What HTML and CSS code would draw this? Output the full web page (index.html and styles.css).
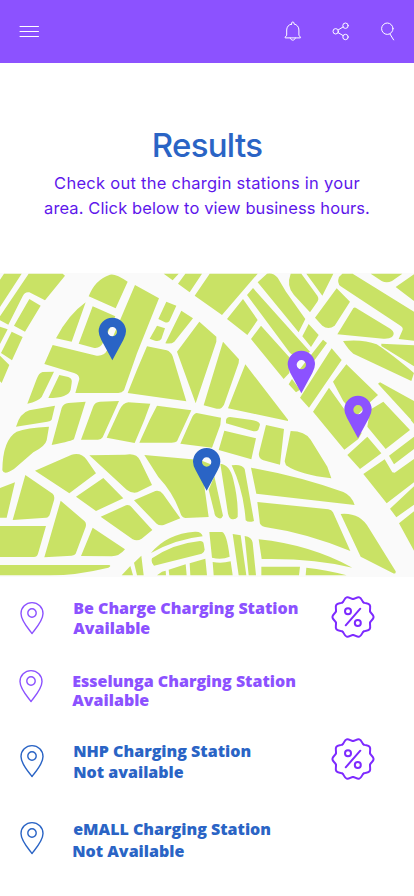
FILE: index.html
```html
<!DOCTYPE html>
<html lang="en">
<head>
<meta charset="utf-8">
<meta name="viewport" content="width=device-width, initial-scale=1">
<title>Results</title>
<link rel="stylesheet" href="styles.css">
</head>
<body>
<svg class="defs" aria-hidden="true">
  <symbol id="pin-outline" viewBox="-12 -12 24 34"><path d="M0 20.500C-3.500 15.800-11 8-11 .6A11 11 0 0 1 11 .6C11 8 3.500 15.800 0 20.500Z"/><circle r="4.200"/></symbol>
  <symbol id="badge" viewBox="-22 -22 44 44">
    <g id="lobes"><path id="lobe" d="M17.12-5.56C17.8-3.5 20.6-2.4 20.6 0S17.8 3.5 17.12 5.56"/><use href="#lobe" transform="rotate(36)"/><use href="#lobe" transform="rotate(72)"/><use href="#lobe" transform="rotate(108)"/><use href="#lobe" transform="rotate(144)"/><use href="#lobe" transform="rotate(180)"/><use href="#lobe" transform="rotate(216)"/><use href="#lobe" transform="rotate(252)"/><use href="#lobe" transform="rotate(288)"/><use href="#lobe" transform="rotate(324)"/></g>
    <circle cx="-5" cy="-5.8" r="3"/><circle cx="4.8" cy="6" r="3"/><path d="M-7.3 8.3L7.3-8.3"/>
  </symbol>
  <symbol id="pin" viewBox="-41 -42 82 128" overflow="visible"><path fill-rule="evenodd" d="M0 86L-33 25Q-41 10-41-1A41 41 0 0 1 41-1Q41 10 33 25ZM14 0A14 14 0 1 0-14 0A14 14 0 1 0 14 0Z"/></symbol>
</svg>

<header class="topbar">
  <svg class="menu" viewBox="0 0 22 24"><path d="M1 7.500h18.500M1 12.500h18.500M1 17.500h18.500"/></svg>
  <div class="actions">
    <svg viewBox="0 0 24 24"><path d="M10.6 5V4.2a1.2 1.2 0 0 1 2.4 0V5c3 .6 4.9 2.9 4.9 6v5.2l1.5 2v.7H4.2v-.7l1.5-2V11c0-3.100 1.900-5.400 4.900-6zM9.300 19c.4 3 4.600 3 5 0"/></svg>
    <svg viewBox="0 0 24 24"><circle cx="6.700" cy="12.300" r="2.700"/><circle cx="16.500" cy="6.700" r="2.700"/><circle cx="16.500" cy="18" r="2.700"/><path d="M9.100 11l5-3.100M9.100 13.600l5 3"/></svg>
    <svg viewBox="0 0 24 24"><circle cx="11.300" cy="9.700" r="5.700"/><path d="M13.900 14.900l3.700 6"/></svg>
  </div>
</header>

<main>
  <section class="intro">
    <h1>Results</h1>
    <p><span class="l1">Check out the chargin stations in your</span> <span class="l2">area. Click below to view business hours.</span></p>
  </section>

  <svg class="map" viewBox="0 0 1242 911">
    <g class="blocks">
      <path d="M12 2H65L0 102V20ZM86 2H188L195 8 135 82 88 58Q75 55 68 70L25 155 0 142V130ZM88 78L122 98 75 176 42 158ZM35 176L68 192 36 262 3 240ZM0 161L23 169 0 213ZM0 248L28 276 5 330 0 325Z"/>
      <path d="M266 70Q285 20 330 5Q345 0 383 26L347 106ZM257 88L215 206 168 196Q205 125 257 88ZM278 100L346 130 310 208Q300 228 280 224L236 212ZM158 216L290 248Q312 250 322 231L405 36 477 76 411 241 372 352Q366 360 355 360H226L238 318Q238 304 222 300L133 273Z"/>
      <path d="M128 297L162 296 125 372Q115 385 82 392L110 318Q117 299 128 297ZM178 306L205 312Q218 316 215 330L212 350Q205 375 145 375ZM165 398L155 440Q152 444 142 446L48 461Q60 420 88 412ZM205 390L257 386 222 498Q220 503 155 516L185 405Q190 392 205 390ZM300 386L357 384 308 493Q304 500 294 500H243L280 400Q285 387 300 386ZM385 388L451 392 433 441 404 510 320 494 358 412Q368 390 385 388Z"/>
      <path d="M441 220L500 232Q512 236 518 250L559 385 383 360 411 290ZM471 398L574 412 531 505Q527 509 515 509H418L449 441ZM590 420L663 434 661 456 636 524 541 512 575 436Q580 422 590 420ZM499 86L529 98 508 145Q503 150 495 148L475 138ZM471 158L495 166 484 198Q478 206 465 203L449 197ZM544 113L579 136 523 206Q515 214 496 211ZM598 146L649 191V206L587 391 531 236ZM669 206L717 259 716 270 672 395Q664 410 650 407L611 397ZM736 274L864 440V444L684 406Z"/>
      <path d="M491 2H536L518 22ZM556 2H606L569 58 534 32ZM629 2H773L666 126 584 68ZM729 78L773 141 742 186 681 138ZM773 28L801 2Q820-2 833 14L858 56 916 138 896 178ZM759 45L930 236 900 260 870 240 741 66ZM783 158L870 255 868 300 851 318 753 198ZM866 334L876 318 900 350 888 358ZM926 153L956 186 933 222 907 190ZM969 200L981 210 912 305 898 290ZM995 226L1025 261 927 404 900 374Z"/>
      <path d="M872 2H904L952 68Q958 78 952 86L930 118 882 66Q858 40 872 2ZM919 2H1000L967 68ZM1010 46L1050 86 1004 158Q985 172 967 158L945 134ZM1027 2H1058L1242 116V203L1196 198 1208 170Q1210 163 1198 156L1022 40Q1010 30 1017 12ZM1112 2H1207L1176 24Q1160 32 1145 24ZM1242 4V84L1187 42ZM1067 104L1172 168Q1188 180 1176 192 1168 198 1150 197L1012 184 1057 110Q1061 101 1067 104ZM1029 204Q1090 198 1130 214 1170 240 1242 300L1234 324 1060 242Q1045 230 1029 204ZM1144 212L1242 217V280L1144 219Z"/>
      <path d="M1039 274L1134 366 1110 388 1070 428 1030 385 999 326ZM1134 332L1140 328 1242 384V450ZM1150 386L1230 471 1157 528 1102 461 1110 410ZM987 344L1034 410 1085 480 1075 498 1033 530 939 416ZM1102 491L1144 541 1080 588 1042 546ZM1154 559L1177 598 1184 599 1242 558V628L1160 691 1090 603ZM1167 548L1242 491V528L1182 574ZM1242 640V695L1189 733 1170 707ZM1197 751L1242 715V833ZM1232 441H1242V453Z"/>
      <path d="M678 441Q680 432 690 432L755 441Q780 445 780 455L775 470Q770 478 755 473L678 451ZM673 473L768 496 754 559 656 531ZM798 456L852 468 840 575 790 562Q774 555 777 540ZM872 474Q915 474 932 500L982 581 994 616Q900 606 858 577L854 565ZM753 584Q900 610 1030 657 1055 668 1064 696L769 662ZM772 687L985 709Q995 710 999 718L1051 834Q920 780 795 762 778 758 779 745ZM1022 723Q1080 718 1107 766L1187 895Q1188 905 1178 900L1082 851ZM776 799Q930 815 1057 884 940 855 785 858ZM784 881H900L897 907H784ZM919 884Q980 890 1040 907H917Z"/>
      <path d="M50 476Q80 464 147 461L140 502Q136 520 100 538L42 588Q12 608 7 592 8 500 50 476ZM105 593L215 545Q245 538 260 560L288 601 208 661ZM268 547L375 545Q410 538 420 562L456 636 412 658Q395 662 380 650ZM310 615L370 676 288 714 228 671ZM76 606L158 662Q165 668 162 682L150 722Q147 733 138 734L38 741ZM45 628L20 734H0V645ZM0 759H138L114 842Q111 852 102 852H0ZM182 683L254 745Q260 751 257 762L227 842Q224 847 215 848L133 853ZM278 764L375 829Q358 850 335 850L243 849ZM0 876H328Q335 880 325 884 230 907 150 907H0ZM302 731L378 697Q388 694 395 703L457 771 425 797Q412 806 398 799Z"/>
      <path d="M402 682L466 654Q480 651 489 663L541 736 491 756Q478 759 470 752ZM433 546L600 561 632 574 613 640 626 732 556 735Q545 733 541 720 520 660 475 612ZM643 610L669 728Q664 740 655 735 643 730 643 718L626 650ZM661 572Q690 575 700 620 715 680 713 732 705 742 692 737 686 732 684 722ZM695 577Q725 572 734 588L762 744Q745 750 737 742 730 650 695 577ZM453 840Q500 782 585 776 605 775 608 790 530 798 453 840ZM456 856Q520 812 600 804 610 804 611 812L614 830Q613 838 605 842L462 878Q452 870 456 856ZM471 907L486 896 497 893 498 907ZM506 890L557 874 560 907H508ZM569 871L616 857 621 907H571ZM628 777H666Q680 780 689 851 665 861 636 854ZM638 867Q665 872 692 865L698 907H641ZM698 783L722 787 739 907H716ZM734 789Q756 792 758 809L768 907H746ZM365 907L391 879 399 907ZM402 869L424 848 431 907H411Z"/>
    </g>
    <use class="blue" href="#pin" x="296" y="134" width="82" height="128"/>
    <use class="blue" href="#pin" x="579" y="525" width="82" height="128"/>
    <use class="purple" href="#pin" x="863" y="233" width="82" height="128"/>
    <use class="purple" href="#pin" x="1033" y="368" width="82" height="128"/>
  </svg>

  <ul class="stations">
    <li class="row first available">
      <svg class="marker"><use href="#pin-outline"/></svg>
      <div class="text"><div>Be Charge Charging Station</div><div>Available</div></div>
      <svg class="badge"><use href="#badge"/></svg>
    </li>
    <li class="row second available">
      <svg class="marker"><use href="#pin-outline"/></svg>
      <div class="text"><div>Esselunga Charging Station</div><div>Available</div></div>
    </li>
    <li class="row third busy">
      <svg class="marker"><use href="#pin-outline"/></svg>
      <div class="text"><div>NHP Charging Station</div><div>Not available</div></div>
      <svg class="badge"><use href="#badge"/></svg>
    </li>
    <li class="row fourth busy">
      <svg class="marker"><use href="#pin-outline"/></svg>
      <div class="text"><div>eMALL Charging Station</div><div class="nudge">Not Available</div></div>
    </li>
  </ul>
</main>
</body>
</html>
```
FILE: styles.css
```css
* { box-sizing: border-box; }
body { margin: 0; width: 414px; height: 896px; overflow: hidden; background: #fff; font-family: "Open Sans", sans-serif; }
.defs { display: none; }
.topbar { height: 63px; background: #8c52ff; display: flex; align-items: center; justify-content: space-between; padding: 0 14px 1px 19px; }
.topbar svg { display: block; width: 24px; height: 24px; fill: none; stroke: #fff; stroke-width: 1; stroke-linecap: round; stroke-linejoin: round; }
.topbar .menu { width: 22px; }
.actions { display: flex; gap: 23.500px; }
.intro { height: 210px; padding-top: 62px; text-align: center; }
h1 { margin: 0; font: 500 33px/40px Inter, sans-serif; letter-spacing: -.7px; color: #2a64c5; }
.intro p { margin: 6px 0 0; font: 400 16.500px/25px Inter, sans-serif; color: #5e17eb; }
.intro span { display: block; white-space: nowrap; }
.l1 { letter-spacing: .27px; }
.l2 { letter-spacing: .1px; }
.map { display: block; width: 414px; height: 303.700px; background: #fafafa; }
.blocks { fill: #c9e265; }
.blue { fill: #2a64c5; }
.purple { fill: #8c52ff; }
.stations { margin: 0; padding: 13.300px 0 0; list-style: none; }
.row { display: flex; align-items: flex-start; height: 75px; padding-left: 20px; font-size: 16px; font-weight: 800; }
.available { color: #8c52ff; }
.busy { color: #2a64c5; }
.marker { width: 24px; height: 34px; flex: none; fill: none; stroke: currentColor; stroke-width: 1.400; stroke-linejoin: round; }
.text { width: 257px; margin-left: 29.200px; white-space: nowrap; }
.badge { width: 44px; height: 44px; flex: none; margin-left: .8px; fill: none; stroke: #7d2aff; stroke-width: 2; stroke-linecap: round; }
.first { height: 70px; }
.first .marker { margin-top: 11px; }
.first .text { margin-top: 8px; line-height: 20px; }
.first .badge { margin-top: 5px; }
.second { padding-left: 19px; }
.second .marker { margin-top: 9.500px; }
.second .text { margin-top: 12px; line-height: 19px; }
.third .marker { margin-top: 9px; }
.third .text { margin-top: 5.700px; line-height: 21px; }
.third .badge { margin-top: 2px; }
.fourth .marker { margin-top: 11px; }
.fourth .text { margin-top: 8px; line-height: 22px; }
.nudge { margin-left: -1px; }
```
